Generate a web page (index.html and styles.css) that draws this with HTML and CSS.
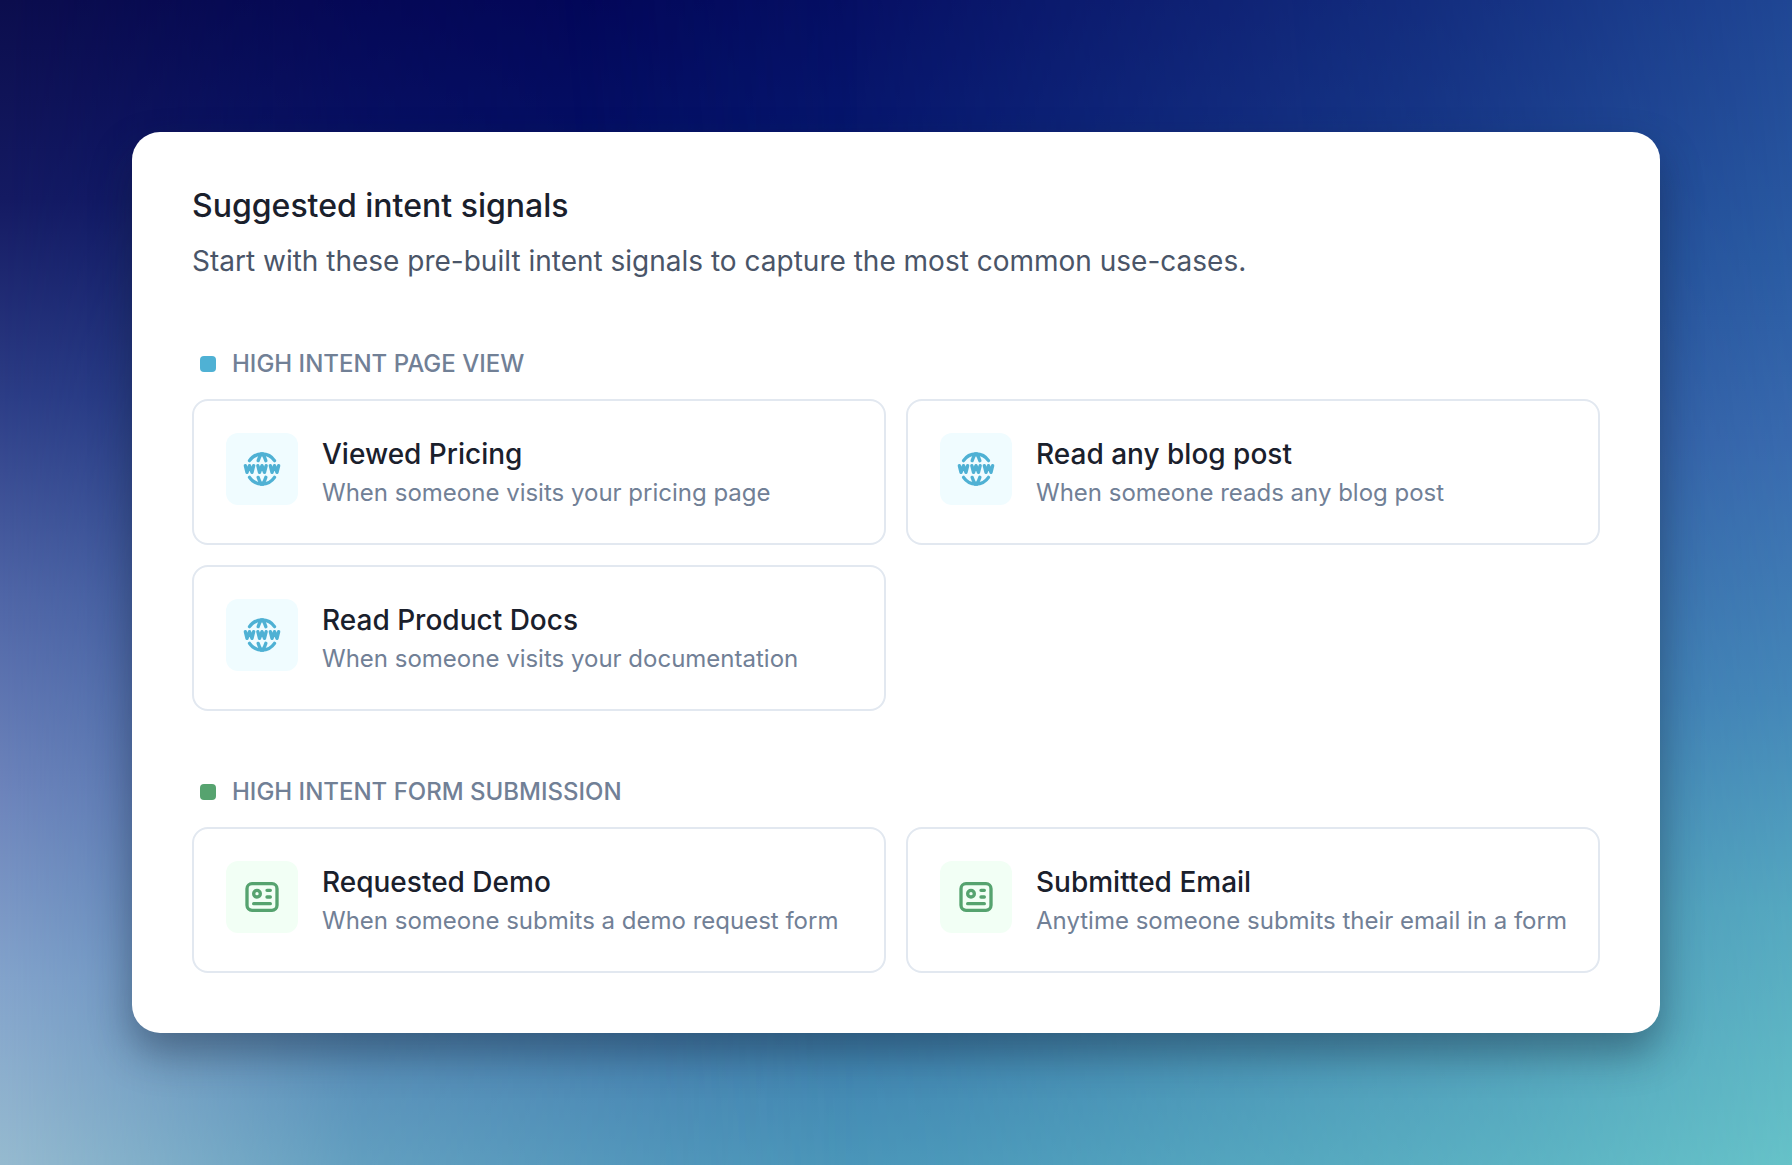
FILE: index.html
```html
<!DOCTYPE html>
<html lang="en">
<head>
<meta charset="utf-8">
<meta name="viewport" content="width=device-width, initial-scale=1">
<title>Suggested intent signals</title>
<link rel="stylesheet" href="styles.css">
</head>
<body>
<svg class="sprite" aria-hidden="true">
  <symbol id="icon-www" viewBox="0 0 24 24">
    <path d="M19.5 7a9 9 0 0 0-7.500-4 8.991 8.991 0 0 0-7.484 4"/>
    <path d="M11.500 3a16.989 16.989 0 0 0-1.826 4"/>
    <path d="M12.500 3a16.989 16.989 0 0 1 1.828 4"/>
    <path d="M19.500 17a9 9 0 0 1-7.500 4 8.991 8.991 0 0 1-7.484-4"/>
    <path d="M11.500 21a16.989 16.989 0 0 1-1.826-4"/>
    <path d="M12.500 21a16.989 16.989 0 0 0 1.828-4"/>
    <path d="M2 10l1 4 1.500-4 1.500 4 1-4"/>
    <path d="M17 10l1 4 1.500-4 1.500 4 1-4"/>
    <path d="M9.500 10l1 4 1.500-4 1.500 4 1-4"/>
  </symbol>
  <symbol id="icon-form" viewBox="0 0 24 24">
    <rect x="3" y="4" width="18" height="16" rx="3"/>
    <circle cx="9" cy="10" r="2"/>
    <path d="M15 8h2M15 12h2M7 16h10"/>
  </symbol>
</svg>
<main class="panel">
  <header class="panel-header">
    <h1 class="panel-title">Suggested intent signals</h1>
    <p class="panel-text">Start with these pre-built intent signals to capture the most common use-cases.</p>
  </header>

  <section class="group group-view">
    <h2 class="group-title">HIGH INTENT PAGE VIEW</h2>
    <div class="signals">
      <button class="signal" type="button">
        <span class="signal-icon"><svg class="icon"><use href="#icon-www"/></svg></span>
        <span class="signal-body">
          <span class="signal-name">Viewed Pricing</span>
          <span class="signal-text">When someone visits your pricing page</span>
        </span>
      </button>
      <button class="signal" type="button">
        <span class="signal-icon"><svg class="icon"><use href="#icon-www"/></svg></span>
        <span class="signal-body">
          <span class="signal-name">Read any blog post</span>
          <span class="signal-text">When someone reads any blog post</span>
        </span>
      </button>
      <button class="signal" type="button">
        <span class="signal-icon"><svg class="icon"><use href="#icon-www"/></svg></span>
        <span class="signal-body">
          <span class="signal-name">Read Product Docs</span>
          <span class="signal-text">When someone visits your documentation</span>
        </span>
      </button>
    </div>
  </section>

  <section class="group group-form">
    <h2 class="group-title">HIGH INTENT FORM SUBMISSION</h2>
    <div class="signals">
      <button class="signal" type="button">
        <span class="signal-icon"><svg class="icon"><use href="#icon-form"/></svg></span>
        <span class="signal-body">
          <span class="signal-name">Requested Demo</span>
          <span class="signal-text">When someone submits a demo request form</span>
        </span>
      </button>
      <button class="signal" type="button">
        <span class="signal-icon"><svg class="icon"><use href="#icon-form"/></svg></span>
        <span class="signal-body">
          <span class="signal-name">Submitted Email</span>
          <span class="signal-text">Anytime someone submits their email in a form</span>
        </span>
      </button>
    </div>
  </section>
</main>
</body>
</html>
```
FILE: styles.css
```css
* {
  box-sizing: border-box;
}

body {
  position: relative;
  min-height: 100vh;
  margin: 0;
  padding: 132px;
  font-family: Inter, "Liberation Sans", sans-serif;
  color: #1a202c;
  background: linear-gradient(#02065c 0%, #020d66 11%, #2f5f9f 60%, #3b7aac 88%, #4791b8 100%);
}

/* Side washes of the backdrop, each fading towards the middle */
body::before,
body::after {
  content: "";
  position: absolute;
  inset: 0;
  z-index: -1;
}

body::before {
  background: linear-gradient(#0b0d4d 0%, #141a62 17%, #2c3d86 34%, #4f65a6 51%, #6d84bb 68%, #83a3cb 84%, #96bacf 100%);
  mask-image: linear-gradient(90deg, #000, rgba(0, 0, 0, 0.35) 20%, transparent 48%);
}

body::after {
  background: linear-gradient(#1f4694 0%, #2b5da4 22%, #3a6cb0 38%, #468aba 60%, #58adc2 78%, #6ac8ca 100%);
  mask-image: linear-gradient(265deg, #000, rgba(0, 0, 0, 0.6) 20%, rgba(0, 0, 0, 0.15) 50%, transparent 65%);
}

.sprite {
  position: absolute;
  width: 0;
  height: 0;
}

.panel {
  padding: 56px 60px 60px;
  background: #fff;
  border-radius: 28px;
  box-shadow: 0 20px 40px rgba(20, 30, 50, 0.42);
}

.panel-title {
  margin: 0;
  font-size: 32px;
  font-weight: 500;
  line-height: 36px;
}

.panel-text {
  margin: 16px 0 0;
  font-size: 28px;
  line-height: 43px;
  color: #4a5568;
}

.group {
  margin-top: 64px;
}

.group-view {
  --accent: #4fb1d4;
  --tint: #f0fcff;
}

.group-form {
  --accent: #56a36f;
  --tint: #f2fff5;
}

.group-title {
  display: flex;
  align-items: center;
  gap: 16px;
  margin: 0 0 18px;
  padding-left: 8px;
  font-size: 24px;
  font-weight: 500;
  line-height: 34px;
  color: #718096;
}

.group-title::before {
  content: "";
  width: 16px;
  height: 16px;
  border-radius: 4px;
  background: var(--accent);
}

.signals {
  display: grid;
  grid-template-columns: repeat(2, minmax(0, 1fr));
  gap: 20px;
}

.signal {
  display: flex;
  align-items: flex-start;
  gap: 24px;
  padding: 32px 24px 32px 32px;
  border: 2px solid #e2e8f0;
  border-radius: 16px;
  background: #fff;
  font: inherit;
  color: inherit;
  text-align: left;
  cursor: pointer;
}

.signal-icon {
  display: grid;
  flex: none;
  place-items: center;
  width: 72px;
  height: 72px;
  border-radius: 12px;
  background: var(--tint);
  color: var(--accent);
}

.icon {
  width: 40px;
  height: 40px;
  fill: none;
  stroke: currentColor;
  stroke-width: 2;
  stroke-linecap: round;
  stroke-linejoin: round;
}

.signal-body {
  display: flex;
  flex-direction: column;
}

.signal-name {
  font-size: 28px;
  font-weight: 500;
  line-height: 42px;
}

.signal-text {
  font-size: 24px;
  line-height: 36px;
  color: #718096;
}
```
